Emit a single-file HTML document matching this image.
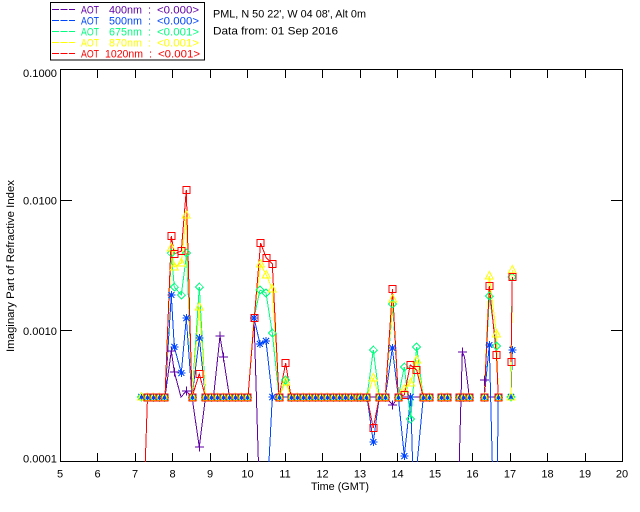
<!DOCTYPE html>
<html><head><meta charset="utf-8"><title>AOT plot</title>
<style>
html,body{margin:0;padding:0;background:#fff;width:640px;height:512px;overflow:hidden}
svg{display:block}
text{font-family:"Liberation Sans",sans-serif;font-size:11px;white-space:pre}
.k{fill:#000;stroke:none}
.l{fill:none;stroke-width:1}
.ln{shape-rendering:crispEdges}
</style></head><body>
<svg width="640" height="512" viewBox="0 0 640 512" xmlns="http://www.w3.org/2000/svg">
<defs>
<clipPath id="c"><rect x="60" y="69" width="563" height="393"/></clipPath>
<path id="pl" class="l" stroke="#5f00a5" d="M-4.5 0H4.5M0-4.5V4.5"/>
<path id="st" class="l" stroke="#0046ff" d="M-4 0H4M0-4V4M-3-3L3 3M-3 3L3-3"/>
<path id="di" class="l" stroke="#00ff7f" d="M0-4L4 0L0 4L-4 0Z"/>
<path id="tr" class="l" stroke="#ffff00" d="M0-4.5L4 3H-4Z"/>
<rect id="sq" class="l" stroke="#ff0000" x="-3.5" y="-3.5" width="7" height="7"/>
<g id="b4">
<use href="#pl"/><use href="#st"/><use href="#di"/><use href="#tr"/>
</g>
<g id="b"><use href="#b4"/><use href="#sq"/></g>
</defs>

<!-- legend -->
<rect x="50.5" y="2.5" width="154" height="57.5" fill="none" stroke="#000" class="ln"/>
<g class="ln" fill="none" stroke-dasharray="7 1.5">
<path stroke="#5f00a5" d="M52 9.5H75"/>
<path stroke="#0046ff" d="M52 20.5H75"/>
<path stroke="#00ff7f" d="M52 31.5H75"/>
<path stroke="#ffff00" d="M52 42.5H75"/>
<path stroke="#ff0000" d="M52 53.5H75"/>
</g>
<g>
<g fill="#5f00a5"><text x="81" y="13.5" textLength="18" lengthAdjust="spacingAndGlyphs">AOT</text><text x="109" y="13.5" textLength="33" lengthAdjust="spacingAndGlyphs">400nm</text><text x="148" y="13.5">:</text><text x="157" y="13.5" textLength="42" lengthAdjust="spacingAndGlyphs">&lt;0.000&gt;</text></g>
<g fill="#0046ff"><text x="81" y="24.5" textLength="18" lengthAdjust="spacingAndGlyphs">AOT</text><text x="109" y="24.5" textLength="33" lengthAdjust="spacingAndGlyphs">500nm</text><text x="148" y="24.5">:</text><text x="157" y="24.5" textLength="42" lengthAdjust="spacingAndGlyphs">&lt;0.000&gt;</text></g>
<g fill="#00ff7f"><text x="81" y="35.5" textLength="18" lengthAdjust="spacingAndGlyphs">AOT</text><text x="109" y="35.5" textLength="33" lengthAdjust="spacingAndGlyphs">675nm</text><text x="148" y="35.5">:</text><text x="157" y="35.5" textLength="42" lengthAdjust="spacingAndGlyphs">&lt;0.001&gt;</text></g>
<g fill="#ffff00"><text x="81" y="46.5" textLength="18" lengthAdjust="spacingAndGlyphs">AOT</text><text x="109" y="46.5" textLength="33" lengthAdjust="spacingAndGlyphs">870nm</text><text x="148" y="46.5">:</text><text x="157" y="46.5" textLength="42" lengthAdjust="spacingAndGlyphs">&lt;0.001&gt;</text></g>
<g fill="#ff0000"><text x="81" y="57.5" textLength="18" lengthAdjust="spacingAndGlyphs">AOT</text><text x="105" y="57.5" textLength="38" lengthAdjust="spacingAndGlyphs">1020nm</text><text x="149" y="57.5">:</text><text x="158" y="57.5" textLength="42" lengthAdjust="spacingAndGlyphs">&lt;0.001&gt;</text></g>
</g>
<text class="k" x="213" y="17.5" textLength="153" lengthAdjust="spacingAndGlyphs">PML, N 50 22', W 04 08', Alt 0m</text>
<text class="k" x="213" y="34.5" textLength="125" lengthAdjust="spacingAndGlyphs">Data from: 01 Sep 2016</text>

<!-- axes -->
<g class="ln" fill="none" stroke="#000">
<path d="M60.5 69.5H622.5V461.5H60.5Z"/>
<path d="M60 200.5H72M60 330.5H72M611 200.5H622M611 330.5H622"/>
<path d="M97.5 70V78M135.5 70V78M172.5 70V78M210.5 70V78M247.5 70V78M285.5 70V78M322.5 70V78M360.5 70V78M397.5 70V78M435.5 70V78M472.5 70V78M510.5 70V78M547.5 70V78M585.5 70V78"/>
<path d="M97.5 453V461M135.5 453V461M172.5 453V461M210.5 453V461M247.5 453V461M285.5 453V461M322.5 453V461M360.5 453V461M397.5 453V461M435.5 453V461M472.5 453V461M510.5 453V461M547.5 453V461M585.5 453V461"/>
</g>
<g class="k" text-anchor="start">
<text class="k" x="23" y="77" textLength="34" lengthAdjust="spacingAndGlyphs">0.1000</text>
<text class="k" x="23" y="204.5" textLength="34" lengthAdjust="spacingAndGlyphs">0.0100</text>
<text class="k" x="23" y="335" textLength="34" lengthAdjust="spacingAndGlyphs">0.0010</text>
<text class="k" x="23" y="462.5" textLength="34" lengthAdjust="spacingAndGlyphs">0.0001</text>
</g>
<g text-anchor="middle">
<text class="k" x="60" y="477.5">5</text><text class="k" x="97.5" y="477.5">6</text><text class="k" x="135" y="477.5">7</text><text class="k" x="172.5" y="477.5">8</text><text class="k" x="210" y="477.5">9</text><text class="k" x="247.5" y="477.5">10</text><text class="k" x="285" y="477.5">11</text><text class="k" x="322.5" y="477.5">12</text><text class="k" x="360" y="477.5">13</text><text class="k" x="397.5" y="477.5">14</text><text class="k" x="435" y="477.5">15</text><text class="k" x="472.5" y="477.5">16</text><text class="k" x="510" y="477.5">17</text><text class="k" x="547.5" y="477.5">18</text><text class="k" x="585" y="477.5">19</text><text class="k" x="622" y="477.5">20</text>
</g>
<text class="k" x="311" y="490" textLength="58" lengthAdjust="spacingAndGlyphs">Time (GMT)</text>
<text class="k" transform="translate(14 352) rotate(-90)" x="0" y="0" textLength="172" lengthAdjust="spacingAndGlyphs">Imaginary Part of Refractive Index</text>

<!-- data -->
<g clip-path="url(#c)">
<!-- purple lines -->
<g class="l ln" stroke="#5f00a5">
<polyline points="141.5,397 165,397 171.3,351 174.3,372 181,397 186.3,391 192,397 199.3,447 205.5,397 213.5,397 220,336 223.3,357 229.5,397 248,397 254,318 260.5,530"/>
<polyline points="279,397 385.3,397 392.7,405 398.3,397 429,397"/>
<polyline points="441,397 447.3,397"/>
<polyline points="459,470 462.3,352 464.5,357 469.3,397"/>
<polyline points="484.3,380 484.3,397 498.3,397"/>
</g>
<!-- blue lines -->
<g class="l ln" stroke="#0046ff">
<polyline points="141.5,397 165,397 171.3,295 174.3,347 181.3,373 186.3,318 192,397 199.3,338 205.5,397 248,397 254,318 260,344 266,341 272.3,397 268.8,465"/>
<polyline points="272.3,397 367,397 373.3,442 379.3,397 385.3,397 392.3,348 398.3,397 404.3,456 410.7,397 412.8,470"/>
<polyline points="416.5,470 423.3,397 429,397"/>
<polyline points="441,397 447.3,397"/><polyline points="459.3,397 469.3,397"/>
<polyline points="484.3,397 489.3,345 492.5,470"/><polyline points="497.3,470 498.3,397"/>
<polyline points="511,397 512.3,350"/>
</g>
<!-- green lines -->
<g class="l ln" stroke="#00ff7f">
<polyline points="141.5,397 165,397 171.3,253 174.3,287 181.3,295 186.7,253 192,397 199.3,287 205.5,397 248,397 254,318 260,290 266,293 272.3,333 279,397 285.7,380 291,397 367,397 373.3,350 379.3,397 385.3,397 392.7,304 398.3,397 404.3,367 410.7,419 416.7,347 423.3,397 429,397"/>
<polyline points="441,397 447.3,397"/><polyline points="459.3,397 469.3,397"/>
<polyline points="484.3,397 489.3,296 496.5,346 498.3,397"/>
<polyline points="511,397 512,277"/>
</g>
<!-- yellow lines -->
<g class="l ln" stroke="#ffff00">
<polyline points="141.5,397 165,397 171.3,248 174.3,267 181.3,263 186.3,215 192,397 199.3,307 205.5,397 248,397 254,318 260.5,264 266.3,275 272.3,289 279,397 285.7,382 291,397 367,397 373.3,378 379.3,397 385.3,397 392.7,299 398.3,397 404.3,389 410.7,383 416.7,360 423.3,397 429,397"/>
<polyline points="441,397 447.3,397"/><polyline points="459.3,397 469.3,397"/>
<polyline points="484.3,397 489.3,276 496.5,334 498.3,397"/>
<polyline points="511,397 512.3,270"/>
</g>
<!-- red lines -->
<g class="l ln" stroke="#ff0000">
<polyline points="145,470 147.5,397 165,397 171.3,236 174.3,254 181.3,251 186.3,190 192,397 199.3,374 205.5,397 248,397 254.3,318 260.6,243 266.3,258 272.3,264 279,397 285.7,363 291,397 367,397 373.3,428 379.3,397 385.3,397 392.5,289 398.3,397 404.3,395 410.3,365 416.7,370 423.3,397 429,397"/>
<polyline points="441,397 447.3,397"/><polyline points="459.3,397 469.3,397"/>
<polyline points="484.3,397 489.3,286 496.5,355 498.3,397"/>
<polyline points="511,362 512.3,277"/>
</g>

<!-- non-baseline markers -->
<g class="ln">
<use href="#pl" x="171.3" y="351"/><use href="#pl" x="174.3" y="372"/><use href="#pl" x="186.3" y="391"/><use href="#pl" x="199.3" y="447"/><use href="#pl" x="220" y="336"/><use href="#pl" x="223.3" y="357"/><use href="#pl" x="392.7" y="405"/><use href="#pl" x="462.3" y="352"/><use href="#pl" x="484.3" y="380"/>
<use href="#st" x="171.3" y="295"/><use href="#st" x="174.3" y="347"/><use href="#st" x="181.3" y="373"/><use href="#st" x="186.3" y="318"/><use href="#st" x="199.3" y="338"/><use href="#st" x="254" y="318"/><use href="#st" x="260" y="344"/><use href="#st" x="266" y="341"/><use href="#st" x="272.3" y="397"/><use href="#st" x="373.3" y="442"/><use href="#st" x="392.3" y="348"/><use href="#st" x="404.3" y="456"/><use href="#st" x="410.7" y="397"/><use href="#st" x="489.3" y="345"/><use href="#st" x="512.3" y="350"/><use href="#st" x="511" y="397"/>
<use href="#di" x="171.3" y="253"/><use href="#di" x="174.3" y="287"/><use href="#di" x="181.3" y="295"/><use href="#di" x="186.7" y="253"/><use href="#di" x="199.3" y="287"/><use href="#di" x="260" y="290"/><use href="#di" x="266" y="293"/><use href="#di" x="272.3" y="333"/><use href="#di" x="285.7" y="380"/><use href="#di" x="373.3" y="350"/><use href="#di" x="392.7" y="304"/><use href="#di" x="404.3" y="367"/><use href="#di" x="410.7" y="419"/><use href="#di" x="416.7" y="347"/><use href="#di" x="489.3" y="296"/><use href="#di" x="496.5" y="346"/><use href="#di" x="512" y="277"/><use href="#di" x="511" y="397"/>
<use href="#tr" x="171.3" y="248"/><use href="#tr" x="174.3" y="267"/><use href="#tr" x="181.3" y="263"/><use href="#tr" x="186.3" y="215"/><use href="#tr" x="199.3" y="307"/><use href="#tr" x="260.5" y="264"/><use href="#tr" x="266.3" y="275"/><use href="#tr" x="272.3" y="289"/><use href="#tr" x="285.7" y="382"/><use href="#tr" x="373.3" y="378"/><use href="#tr" x="392.7" y="299"/><use href="#tr" x="404.3" y="389"/><use href="#tr" x="410.7" y="383"/><use href="#tr" x="416.7" y="360"/><use href="#tr" x="489.3" y="276"/><use href="#tr" x="496.5" y="334"/><use href="#tr" x="512.3" y="270"/><use href="#tr" x="511" y="397"/>
<use href="#sq" x="171.5" y="236"/><use href="#sq" x="174.5" y="254"/><use href="#sq" x="181.5" y="251"/><use href="#sq" x="186.5" y="190"/><use href="#sq" x="199.5" y="374"/><use href="#sq" x="254.5" y="318"/><use href="#sq" x="260.5" y="243"/><use href="#sq" x="266.5" y="258"/><use href="#sq" x="272.5" y="264"/><use href="#sq" x="285.5" y="363"/><use href="#sq" x="373.5" y="428"/><use href="#sq" x="392.5" y="289"/><use href="#sq" x="404.5" y="395"/><use href="#sq" x="410.5" y="365"/><use href="#sq" x="416.5" y="370"/><use href="#sq" x="489.5" y="286"/><use href="#sq" x="496.5" y="355"/><use href="#sq" x="512.5" y="277"/><use href="#sq" x="511.5" y="362"/>
</g>

<!-- baseline markers -->
<g class="ln">
<use href="#b4" x="141.5" y="397"/>
<use href="#b" x="147.5" y="397.5"/><use href="#b" x="153.5" y="397.5"/><use href="#b" x="159.5" y="397.5"/><use href="#b" x="164.5" y="397.5"/>
<use href="#b" x="192.5" y="397.5"/>
<use href="#b" x="205.5" y="397.5"/><use href="#b" x="211.5" y="397.5"/><use href="#b" x="217.5" y="397.5"/><use href="#b" x="223.5" y="397.5"/><use href="#b" x="229.5" y="397.5"/><use href="#b" x="235.5" y="397.5"/><use href="#b" x="241.5" y="397.5"/><use href="#b" x="247.5" y="397.5"/>
<use href="#b" x="279.5" y="397.5"/><use href="#b" x="291.5" y="397.5"/><use href="#b" x="297.5" y="397.5"/><use href="#b" x="303.5" y="397.5"/><use href="#b" x="309.5" y="397.5"/><use href="#b" x="315.5" y="397.5"/><use href="#b" x="321.5" y="397.5"/><use href="#b" x="327.5" y="397.5"/><use href="#b" x="333.5" y="397.5"/><use href="#b" x="339.5" y="397.5"/><use href="#b" x="345.5" y="397.5"/><use href="#b" x="351.5" y="397.5"/><use href="#b" x="357.5" y="397.5"/><use href="#b" x="360.5" y="397.5"/><use href="#b" x="366.5" y="397.5"/>
<use href="#b" x="379.5" y="397.5"/><use href="#b" x="385.5" y="397.5"/><use href="#b" x="398.5" y="397.5"/><use href="#b" x="423.5" y="397.5"/><use href="#b" x="429.5" y="397.5"/>
<use href="#b" x="441.5" y="397.5"/><use href="#b" x="447.5" y="397.5"/>
<use href="#b" x="459.5" y="397.5"/><use href="#b" x="463.5" y="397.5"/><use href="#b" x="469.5" y="397.5"/>
<use href="#b" x="484.5" y="397.5"/><use href="#b" x="498.5" y="397.5"/>
</g>
</g>
</svg>
</body></html>
